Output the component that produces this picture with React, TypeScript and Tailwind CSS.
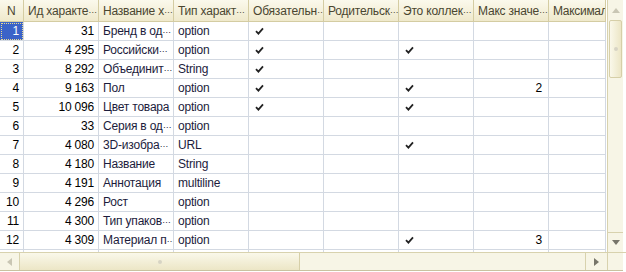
const headers = ['N', 'Ид характе…', 'Название х…', 'Тип характ…', 'Обязательн…', 'Родительск…', 'Это коллек…', 'Макс значе…', 'Максимал'];

type Row = { n: number; id: string; name: string; type: string; req?: boolean; coll?: boolean; max?: string };

const rows: Row[] = [
  { n: 1, id: '31', name: 'Бренд в од…', type: 'option', req: true },
  { n: 2, id: '4 295', name: 'Российски…', type: 'option', req: true, coll: true },
  { n: 3, id: '8 292', name: 'Объединит…', type: 'String', req: true },
  { n: 4, id: '9 163', name: 'Пол', type: 'option', req: true, coll: true, max: '2' },
  { n: 5, id: '10 096', name: 'Цвет товара', type: 'option', req: true, coll: true },
  { n: 6, id: '33', name: 'Серия в од…', type: 'option' },
  { n: 7, id: '4 080', name: '3D-изобра…', type: 'URL', coll: true },
  { n: 8, id: '4 180', name: 'Название', type: 'String' },
  { n: 9, id: '4 191', name: 'Аннотация', type: 'multiline' },
  { n: 10, id: '4 296', name: 'Рост', type: 'option' },
  { n: 11, id: '4 300', name: 'Тип упаков…', type: 'option' },
  { n: 12, id: '4 309', name: 'Материал п…', type: 'option', coll: true, max: '3' },
];

// 1C draws the ellipsis small, close to the baseline
const Cut = ({ text }: { text: string }) => {
  if (!text.endsWith('…')) return <>{text}</>;
  return (
    <>
      {text.slice(0, -1)}
      <span className="text-[9px] tracking-[-1px]">…</span>
    </>
  );
};

const Check = () => (
  <svg width="9" height="8" viewBox="0 0 9 8" className="ml-[6px] shrink-0">
    <path d="M1 4.2 L3.4 6.6 L8 1.4" fill="none" stroke="#222" strokeWidth="1.8" />
  </svg>
);

const cell = 'h-[19px] border-b border-r border-[#d3d9e2] flex items-center overflow-hidden whitespace-nowrap';

const App = () => {
  return (
    <div className="w-[626px] h-[272px] bg-white flex flex-col text-[12px] tracking-[-0.2px] text-[#1c1c3c]" style={{ fontFamily: '"Liberation Sans", Arial, sans-serif' }}>
      <div className="flex h-[252px]">
        <div className="w-[607px] overflow-hidden">
          <div className="grid grid-cols-[24px_repeat(7,75px)_57px]">
            {headers.map((h, i) => (
              <div
                key={h}
                className={`h-[22px] border-b border-r border-[#d4cca2] bg-gradient-to-b from-[#fbf9ec] to-[#efe9cc] text-[#4a4630] flex items-center whitespace-nowrap overflow-hidden ${i === 0 ? 'pl-[7px]' : 'pl-[4px]'} ${i === 8 ? 'tracking-[-0.3px]' : ''}`}
              >
                <Cut text={h} />
              </div>
            ))}
            {rows.map((r) => (
              <div key={r.n} className="contents">
                <div className={`${cell} justify-end pr-[4px] ${r.n === 1 ? 'bg-[#3b63c8] text-white outline-1 outline-dotted outline-[#e8d890] -outline-offset-2' : 'text-black'}`}>
                  {r.n}
                </div>
                <div className={`${cell} justify-end pr-[4px] text-black`}>{r.id}</div>
                <div className={`${cell} pl-[4px]`}><Cut text={r.name} /></div>
                <div className={`${cell} pl-[4px]`}>{r.type}</div>
                <div className={cell}>{r.req && <Check />}</div>
                <div className={cell}></div>
                <div className={cell}>{r.coll && <Check />}</div>
                <div className={`${cell} justify-end pr-[6px] text-black`}>{r.max}</div>
                <div className={cell}></div>
              </div>
            ))}
            {Array.from({ length: 9 }).map((_, i) => (
              <div key={i} className="h-[19px] border-r border-[#d3d9e2]"></div>
            ))}
          </div>
        </div>
        <div className="w-[16px] flex flex-col bg-[#f7f5e6] border-l border-[#d8d2ae]">
          <div className="h-[20px] flex items-center justify-center">
            <svg width="8" height="5" viewBox="0 0 8 5"><path d="M0 5 L4 0 L8 5 Z" fill="#c9c6b4" /></svg>
          </div>
          <div className="h-[58px] mx-[1px] border border-[#d6cfa8] rounded-[2px] bg-gradient-to-r from-[#faf8ea] to-[#ece6c6] flex items-center justify-center">
            <div className="w-[4px] h-[4px] rounded-full bg-[#d7d4c4]"></div>
          </div>
          <div className="flex-1"></div>
          <div className="h-[20px] border-t border-[#d8d2ae] flex items-center justify-center">
            <svg width="8" height="5" viewBox="0 0 8 5"><path d="M0 0 L8 0 L4 5 Z" fill="#77756a" /></svg>
          </div>
        </div>
        <div className="flex-1 bg-white"></div>
      </div>
      <div className="flex h-[18px] border-t border-[#d8d2ae]">
        <div className="w-[607px] flex bg-[#f7f5e6]">
          <div className="w-[20px] flex items-center justify-center border-r border-[#d8d2ae]">
            <svg width="5" height="8" viewBox="0 0 5 8"><path d="M5 0 L5 8 L0 4 Z" fill="#c9c6b4" /></svg>
          </div>
          <div className="w-[280px] border-r border-[#d6cfa8] bg-gradient-to-b from-[#faf8ea] to-[#ece6c6] flex items-center justify-center">
            <div className="w-[4px] h-[4px] rounded-full bg-[#d7d4c4]"></div>
          </div>
          <div className="flex-1"></div>
          <div className="w-[22px] flex items-center justify-center border-l border-[#d8d2ae]">
            <svg width="5" height="8" viewBox="0 0 5 8"><path d="M0 0 L5 4 L0 8 Z" fill="#77756a" /></svg>
          </div>
        </div>
        <div className="w-[16px] bg-[#f7f5e6] border-l border-[#d8d2ae]"></div>
        <div className="flex-1 bg-white"></div>
      </div>
      <div className="flex-1 border-t border-[#c9c2a0] w-[623px]"></div>
    </div>
  );
};

export default App;
